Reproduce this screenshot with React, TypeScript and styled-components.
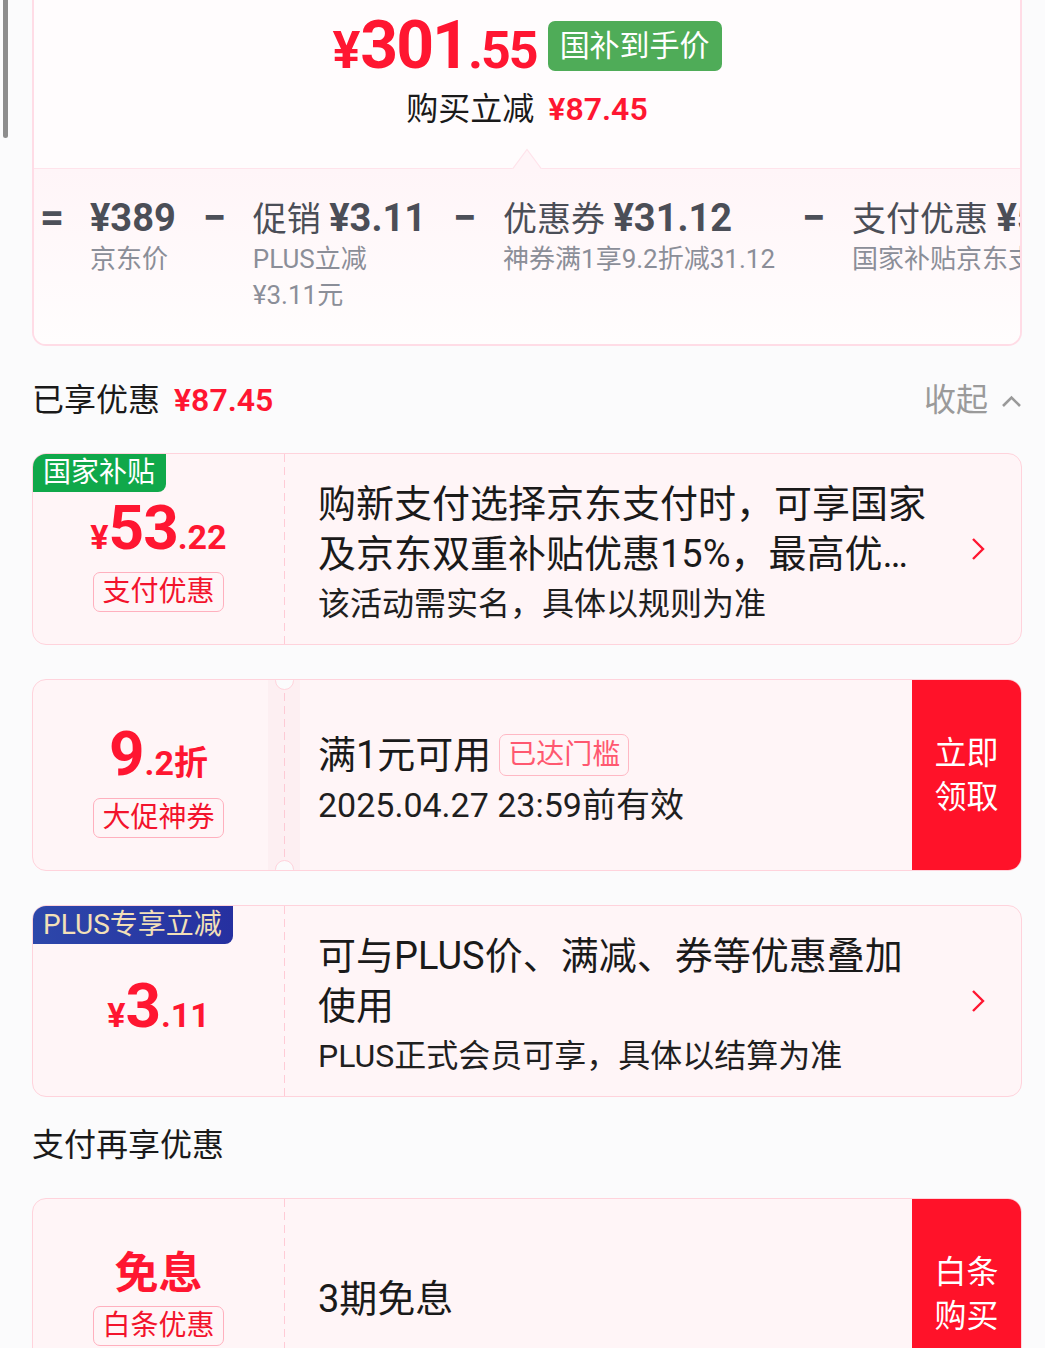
import * as React from 'react';
import styled, { createGlobalStyle } from 'styled-components';

const RED = '#ff1631';

const GlobalStyle = createGlobalStyle`
  * { box-sizing: border-box; }
  html, body { margin: 0; padding: 0; background: #fbfbfc; }
  body {
    font-family: Roboto, "Noto Sans CJK SC", sans-serif;
    color: #1a1a1a;
  }
`;

const Page = styled.div`
  position: relative;
  height: 1348px;
  overflow: hidden;
  padding: 0 23px 0 32px;
`;

const ScrollThumb = styled.div`
  position: fixed;
  left: 3px;
  top: 0;
  width: 5px;
  height: 138px;
  border-radius: 0 0 3px 3px;
  background: #8d8d8d;
`;

/* ---------- top summary card ---------- */

const TopCard = styled.section`
  position: relative;
  border: 2px solid #ffdce6;
  border-top: none;
  border-radius: 0 0 14px 14px;
  background: #fffcfd;
  overflow: hidden;
`;

const Summary = styled.div`
  position: relative;
  height: 168px;
  padding-top: 21px;
  display: flex;
  flex-direction: column;
  align-items: center;
`;

const PriceRow = styled.div`
  display: flex;
  align-items: center;
  gap: 11px;
  height: 50px;
`;

const Amount = styled.div`
  display: flex;
  align-items: baseline;
  color: ${RED};
  font-family: Roboto, "Noto Sans CJK SC", sans-serif;
  font-weight: 700;
  line-height: 1;
`;

const Part = styled.span<{ $size: number; $track?: number }>`
  font-size: ${(p) => p.$size}px;
  letter-spacing: ${(p) => p.$track ?? 0}px;
`;

const PriceBadge = styled.span`
  height: 50px;
  padding: 0 12px;
  border-radius: 7px;
  background: #4fac58;
  color: #fff;
  font-size: 30px;
  line-height: 50px;
`;

const SavingLine = styled.div`
  margin-top: 18px;
  font-size: 32px;
  line-height: 40px;
  color: #1a1a1a;
`;

const RedNum = styled.span`
  margin-left: 14px;
  color: ${RED};
  font-weight: 600;
`;

const Pointer = styled.svg`
  position: absolute;
  left: 50%;
  bottom: -1px;
  margin-left: -15px;
`;

const Breakdown = styled.div`
  display: flex;
  align-items: flex-start;
  gap: 27px;
  padding: 27px 0 31px 6px;
  border-top: 1px solid #ffe3eb;
  background: linear-gradient(#fff5f8, #fffdfd);
  white-space: nowrap;
`;

const Op = styled.span`
  flex-shrink: 0;
  width: 23px;
  text-align: center;
  font-size: 42px;
  line-height: 44px;
  font-weight: 700;
  color: #4d5059;
`;

const Item = styled.div`
  flex-shrink: 0;
  display: flex;
  flex-direction: column;
`;

const ItemTitle = styled.div`
  font-size: 34px;
  line-height: 44px;
  color: #4b4e57;

  b {
    font-size: 38px;
    font-weight: 700;
  }
`;

const ItemSub = styled.div`
  font-size: 26px;
  line-height: 36px;
  color: #8b8e98;
`;

/* ---------- section headers ---------- */

const SectionHeader = styled.div<{ $top: number }>`
  display: flex;
  align-items: center;
  justify-content: space-between;
  height: 60px;
  margin: ${(p) => p.$top}px 0 26px;
  font-size: 32px;
  color: #1a1a1a;
`;

const Collapse = styled.span`
  display: flex;
  align-items: center;
  gap: 13px;
  color: #9a9a9a;

  svg {
    margin-top: 8px;
  }
`;

/* ---------- offer cards ---------- */

const CardList = styled.div`
  display: flex;
  flex-direction: column;
  gap: 34px;
`;

const Card = styled.div`
  position: relative;
  display: flex;
  height: 192px;
  border: 1px solid #ffd3dc;
  border-radius: 14px;
  background: #fff5f7;
  overflow: hidden;
`;

const CornerTag = styled.span<{ $variant: 'green' | 'plus' }>`
  position: absolute;
  left: -1px;
  top: -1px;
  height: 39px;
  padding: 0 11px;
  border-radius: 0 0 8px 0;
  font-size: 28px;
  line-height: 39px;
  background: ${(p) =>
    p.$variant === 'green' ? '#10a84a' : 'linear-gradient(90deg, #2d47aa, #2630a0)'};
  color: ${(p) => (p.$variant === 'green' ? '#fff' : '#f3e0b8')};
`;

const Left = styled.div`
  width: 251px;
  flex-shrink: 0;
  padding-top: 10px;
  display: flex;
  flex-direction: column;
  align-items: center;
  justify-content: center;
`;

const Free = styled.div`
  color: ${RED};
  font-size: 44px;
  font-weight: 700;
  line-height: 44px;
`;

const Badge = styled.span<{ $soft?: boolean; $top?: number }>`
  margin-top: ${(p) => p.$top ?? 13}px;
  height: ${(p) => (p.$soft ? 42 : 40)}px;
  padding: 0 8px;
  border: 1.5px solid ${(p) => (p.$soft ? '#ffb8c4' : '#ffb0be')};
  border-radius: 7px;
  font-size: 28px;
  line-height: ${(p) => (p.$soft ? 39 : 37)}px;
  color: ${(p) => (p.$soft ? '#ff5870' : '#f3132c')};
  white-space: nowrap;
`;

const Divider = styled.div<{ $ticket?: boolean }>`
  position: relative;
  width: 1px;
  flex-shrink: 0;
  background: repeating-linear-gradient(to bottom, #ffcbd6 0 8px, transparent 8px 13px);

  &::before {
    content: '';
    display: ${(p) => (p.$ticket ? 'block' : 'none')};
    position: absolute;
    top: 0;
    bottom: 0;
    left: -16px;
    width: 32px;
    background: rgba(240, 200, 210, 0.13);
  }
`;

const Notch = styled.span<{ $side: 'top' | 'bottom' }>`
  position: absolute;
  left: -9px;
  ${(p) => (p.$side === 'top' ? 'top: -9px;' : 'bottom: -9px;')}
  width: 19px;
  height: 19px;
  border-radius: 50%;
  border: 1px solid #ffd3dc;
  background: #fbfbfc;
`;

const Body = styled.div`
  flex: 1;
  min-width: 0;
  padding: 10px 0 0 33px;
  display: flex;
  flex-direction: column;
  justify-content: center;
`;

const Title = styled.div`
  font-size: 38px;
  line-height: 50px;
  color: #1a1a1a;
  display: -webkit-box;
  -webkit-line-clamp: 2;
  -webkit-box-orient: vertical;
  overflow: hidden;
`;

const TitleRow = styled.div`
  display: flex;
  align-items: center;
  gap: 8px;
  font-size: 38px;
  line-height: 50px;
`;

const Sub = styled.div<{ $size?: number }>`
  font-size: ${(p) => p.$size ?? 32}px;
  line-height: 50px;
  color: #1f1f1f;
  white-space: nowrap;
`;

const ArrowBox = styled.div`
  width: 82px;
  flex-shrink: 0;
  display: flex;
  align-items: center;
  justify-content: flex-end;
  padding-right: 36px;
`;

const ActionButton = styled.button`
  width: 109px;
  flex-shrink: 0;
  border: none;
  padding: 0;
  background: #ff1229;
  color: #fff;
  font-family: inherit;
  font-size: 32px;
  line-height: 44px;
  text-align: center;
`;

const Chevron: React.FC = () => (
  <svg width="14" height="24" viewBox="0 0 14 24">
    <path d="M2 2 L12 12 L2 22" fill="none" stroke={RED} strokeWidth="2.4" strokeLinejoin="miter" />
  </svg>
);

const ChevronUp: React.FC = () => (
  <svg width="21" height="13" viewBox="0 0 21 13">
    <path d="M2 11 L10.5 2.5 L19 11" fill="none" stroke="#9a9a9a" strokeWidth="2.6" />
  </svg>
);

const App: React.FC = () => {
  return (
    <>
      <GlobalStyle />
      <Page>
        <ScrollThumb />
        <TopCard>
          <Summary>
            <PriceRow>
              <Amount>
                <Part $size={52}>¥</Part>
                <Part $size={66} $track={-2}>301</Part>
                <Part $size={52} $track={-2}>.55</Part>
              </Amount>
              <PriceBadge>国补到手价</PriceBadge>
            </PriceRow>
            <SavingLine>
              购买立减<RedNum>¥87.45</RedNum>
            </SavingLine>
            <Pointer width="30" height="21" viewBox="0 0 30 21">
              <path d="M0 21 L15 1 L30 21 Z" fill="#fff5f8" />
              <path d="M0.5 21 L15 1.5 L29.5 21" fill="none" stroke="#ffe3eb" strokeWidth="1.2" />
            </Pointer>
          </Summary>
          <Breakdown>
            <Op>=</Op>
            <Item>
              <ItemTitle><b>¥389</b></ItemTitle>
              <ItemSub>京东价</ItemSub>
            </Item>
            <Op>−</Op>
            <Item>
              <ItemTitle>促销 <b>¥3.11</b></ItemTitle>
              <ItemSub>PLUS立减</ItemSub>
              <ItemSub>¥3.11元</ItemSub>
            </Item>
            <Op>−</Op>
            <Item>
              <ItemTitle>优惠券 <b>¥31.12</b></ItemTitle>
              <ItemSub>神券满1享9.2折减31.12</ItemSub>
            </Item>
            <Op>−</Op>
            <Item>
              <ItemTitle>支付优惠 <b>¥53.22</b></ItemTitle>
              <ItemSub>国家补贴京东支付立减</ItemSub>
            </Item>
          </Breakdown>
        </TopCard>

        <SectionHeader $top={21}>
          <span>
            已享优惠<RedNum>¥87.45</RedNum>
          </span>
          <Collapse>
            收起
            <ChevronUp />
          </Collapse>
        </SectionHeader>

        <CardList>
          <Card>
            <CornerTag $variant="green">国家补贴</CornerTag>
            <Left>
              <Amount>
                <Part $size={34}>¥</Part>
                <Part $size={62} $track={-1}>53</Part>
                <Part $size={34}>.22</Part>
              </Amount>
              <Badge>支付优惠</Badge>
            </Left>
            <Divider />
            <Body>
              <Title>购新支付选择京东支付时，可享国家及京东双重补贴优惠15%，最高优惠500元</Title>
              <Sub>该活动需实名，具体以规则为准</Sub>
            </Body>
            <ArrowBox>
              <Chevron />
            </ArrowBox>
          </Card>

          <Card>
            <Left>
              <Amount>
                <Part $size={62}>9</Part>
                <Part $size={34}>.2折</Part>
              </Amount>
              <Badge>大促神券</Badge>
            </Left>
            <Divider $ticket>
              <Notch $side="top" />
              <Notch $side="bottom" />
            </Divider>
            <Body>
              <TitleRow>
                满1元可用
                <Badge $soft $top={0}>已达门槛</Badge>
              </TitleRow>
              <Sub $size={34}>2025.04.27 23:59前有效</Sub>
            </Body>
            <ActionButton>
              立即
              <br />
              领取
            </ActionButton>
          </Card>

          <Card>
            <CornerTag $variant="plus">PLUS专享立减</CornerTag>
            <Left>
              <Amount>
                <Part $size={34}>¥</Part>
                <Part $size={62}>3</Part>
                <Part $size={34}>.11</Part>
              </Amount>
            </Left>
            <Divider />
            <Body>
              <Title>可与PLUS价、满减、券等优惠叠加使用</Title>
              <Sub>PLUS正式会员可享，具体以结算为准</Sub>
            </Body>
            <ArrowBox>
              <Chevron />
            </ArrowBox>
          </Card>
        </CardList>

        <SectionHeader $top={15}>
          <span>支付再享优惠</span>
        </SectionHeader>

        <Card>
          <Left>
            <Free>免息</Free>
            <Badge $top={10}>白条优惠</Badge>
          </Left>
          <Divider />
          <Body>
            <Title>3期免息</Title>
          </Body>
          <ActionButton>
            白条
            <br />
            购买
          </ActionButton>
        </Card>
      </Page>
    </>
  );
};

export default App;
